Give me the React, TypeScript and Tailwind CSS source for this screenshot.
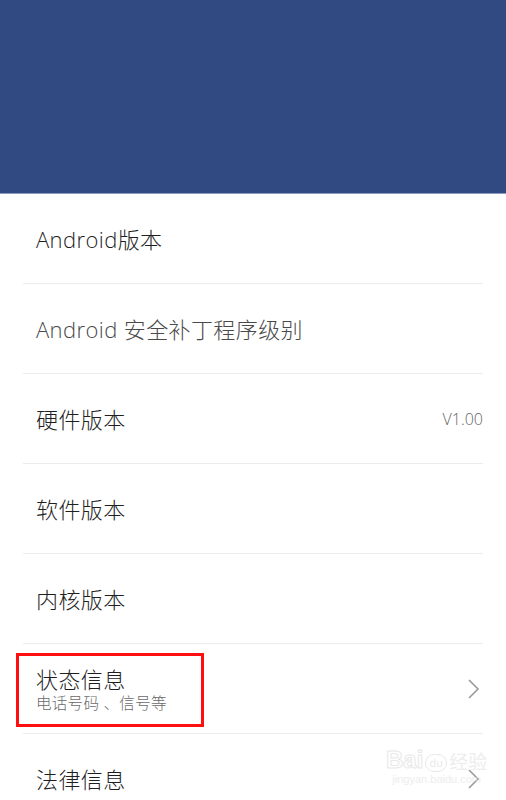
import React from "react";

const font = { fontFamily: '"Open Sans", "Noto Sans CJK SC", sans-serif' };

function Chevron() {
  return (
    <svg width="14" height="22" viewBox="0 0 14 22" className="mr-[2px]">
      <path d="M2 2 L11 11 L2 20" fill="none" stroke="#9a9a9a" strokeWidth="1.6" />
    </svg>
  );
}

function Row({
  title,
  sub,
  value,
  chevron,
  light,
  last,
}: {
  title: string;
  sub?: string;
  value?: string;
  chevron?: boolean;
  light?: boolean;
  last?: boolean;
}) {
  return (
    <div className={`mx-[23px] h-[90px] flex items-center justify-between ${last ? "" : "border-b border-[#ececec]"}`}>
      <div className="pl-[13px] flex flex-col">
        <span className={`text-[22px] leading-[28px] tracking-[0.4px] font-light ${light ? "text-[#4a4a4a]" : "text-[#1f1f1f]"}`}>{title}</span>
        {sub && <span className="text-[15.5px] leading-[20px] text-[#6a6a6a] font-light tracking-[0.3px]">{sub}</span>}
      </div>
      {value && <span className="text-[16px] text-[#666] font-light">{value}</span>}
      {chevron && <Chevron />}
    </div>
  );
}

export default function App() {
  return (
    <div className="relative w-[506px] h-[800px] overflow-hidden bg-white" style={font}>
      <div className="h-[193px] bg-[#314b82]" />
      <div className="h-[1px] bg-[#8b9cc0]" />
      <Row title="Android版本" />
      <Row title="Android 安全补丁程序级别" light />
      <Row title="硬件版本" value="V1.00" />
      <Row title="软件版本" />
      <Row title="内核版本" />
      <Row title="状态信息" sub="电话号码 、信号等" chevron />
      <Row title="法律信息" chevron last />

      <div className="absolute left-[16px] top-[653px] w-[188px] h-[74px] border-[3px] border-[#ff0f0f]" />

      <div className="absolute left-[386px] top-[748px] flex flex-col items-center pointer-events-none opacity-70">
        <div className="flex items-end gap-[2px]">
          <span className="text-[24px] font-bold leading-none" style={{ fontFamily: '"Liberation Sans", sans-serif', WebkitTextStroke: "1px #e0e0e0", color: "white" }}>Bai</span>
          <span className="w-[22px] h-[18px] rounded-full border border-[#e0e0e0] text-[11px] leading-[16px] text-center text-[#e0e0e0]">du</span>
          <span className="text-[19px] leading-none text-[#e6e6e6]">经验</span>
        </div>
        <span className="text-[11px] leading-[14px] text-[#e6e6e6]" style={{ fontFamily: '"Liberation Sans", sans-serif' }}>jingyan.baidu.com</span>
      </div>
    </div>
  );
}
